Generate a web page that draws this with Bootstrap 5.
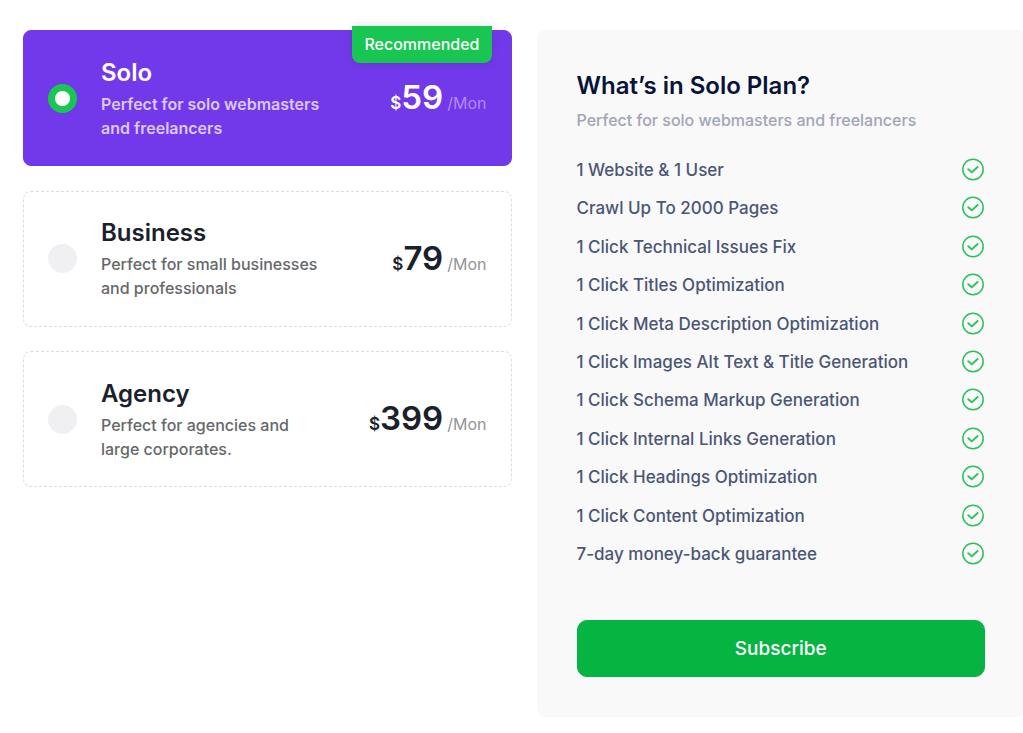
<!DOCTYPE html>
<html lang="en">
<head>
<meta charset="utf-8">
<meta name="viewport" content="width=device-width, initial-scale=1">
<title>Choose a plan</title>
<link href="https://cdn.jsdelivr.net/npm/bootstrap@5.3.0/dist/css/bootstrap.min.css" rel="stylesheet">
<style>
  body { font-family: Inter, "Liberation Sans", sans-serif; font-size: 16px; color: #1b212b; background: #fff; overflow-x: hidden; }
  .pricing { display: grid; grid-template-columns: repeat(2, minmax(0, 1fr)); gap: 25px; align-items: start; margin: 30px -2px 16px 23px; }
  .plan-list { min-height: 457px; }
  .plan { position: relative; min-height: 136px; padding: 0 24px; border: 1px dashed #dcdcdc; border-radius: 8px; cursor: pointer; }
  .plan-text { width: 224px; margin-left: 24px; }
  .plan-name { font-size: 24px; line-height: 32px; font-weight: 600; margin-bottom: 3px; }
  .plan-note { font-size: 16px; line-height: 24px; font-weight: 500; color: #66676b; }
  .plan-dot { width: 29px; height: 29px; margin: 0; border: 0; background-color: #f0f0f3; cursor: pointer; }
  .plan-dot:checked { background-color: #18c651; background-image: radial-gradient(circle, #fff 7px, transparent 8px); }
  .plan-price { padding-bottom: 2px; }
  .plan-currency { font-size: 17px; font-weight: 600; }
  .plan-amount { font-size: 33px; line-height: 42px; font-weight: 600; }
  .plan-period { font-size: 16px; color: #949496; margin-left: 4px; }
  .plan-active { background: #7239ea; border: 1px solid #7239ea; color: #fff; }
  .plan-active .plan-note { color: #dcc9fa; font-weight: 600; }
  .plan-active .plan-period { color: #b08af2; }
  .plan-flag { position: absolute; top: -5px; right: 19px; padding: 0 12px; font-size: 16px; line-height: 37px; font-weight: 500; color: #fff; background: #18c651; border-radius: 0 0 8px 8px; box-shadow: 0 0 8px rgba(0, 0, 0, .12); }
  .details { background: #f9f9f9; border-radius: 8px; padding: 40px; }
  .details-title { font-size: 24px; line-height: 32px; font-weight: 600; color: #071437; margin: 0; }
  .details-note { font-size: 16px; line-height: 24px; font-weight: 500; color: #a1a5b7; margin: 6px 0 26px; }
  .features { min-height: 408px; font-size: 17px; line-height: 24px; font-weight: 500; color: #4b5675; }
  .check-icon { width: 24px; height: 24px; flex: none; }
  .btn-subscribe { margin-top: 54px; padding: 0; font-size: 19px; line-height: 55px; font-weight: 500; border-radius: 10px; --bs-btn-color: #fff; --bs-btn-bg: #05b441; --bs-btn-border-color: #05b441; --bs-btn-hover-color: #fff; --bs-btn-hover-bg: #049c38; }
</style>
</head>
<body>
<svg class="d-none" aria-hidden="true">
  <symbol id="check" viewBox="0 0 24 24">
    <g fill="none" stroke="#2cc15d" stroke-linecap="round" stroke-linejoin="round">
      <circle cx="12" cy="11.5" r="10.2" stroke-width="1.5"/>
      <path d="M7.3 11.2 L10.8 14.4 L16.6 9" stroke-width="1.9"/>
    </g>
  </symbol>
</svg>
<main class="pricing">
  <div class="plan-list d-flex flex-column justify-content-between" role="radiogroup" aria-label="Plans">
    <label class="plan plan-active d-flex align-items-center" for="plan-solo">
      <input class="form-check-input plan-dot flex-shrink-0" type="radio" name="plan" id="plan-solo" checked>
      <span class="plan-text"><span class="plan-name d-block">Solo</span><span class="plan-note d-block">Perfect for solo webmasters and freelancers</span></span>
      <span class="plan-price ms-auto d-flex align-items-baseline"><span class="plan-currency">$</span><span class="plan-amount">59</span><span class="plan-period">/Mon</span></span>
      <span class="plan-flag">Recommended</span>
    </label>
    <label class="plan d-flex align-items-center" for="plan-business">
      <input class="form-check-input plan-dot flex-shrink-0" type="radio" name="plan" id="plan-business">
      <span class="plan-text"><span class="plan-name d-block">Business</span><span class="plan-note d-block">Perfect for small businesses and professionals</span></span>
      <span class="plan-price ms-auto d-flex align-items-baseline"><span class="plan-currency">$</span><span class="plan-amount">79</span><span class="plan-period">/Mon</span></span>
    </label>
    <label class="plan d-flex align-items-center" for="plan-agency">
      <input class="form-check-input plan-dot flex-shrink-0" type="radio" name="plan" id="plan-agency">
      <span class="plan-text"><span class="plan-name d-block">Agency</span><span class="plan-note d-block">Perfect for agencies and large corporates.</span></span>
      <span class="plan-price ms-auto d-flex align-items-baseline"><span class="plan-currency">$</span><span class="plan-amount">399</span><span class="plan-period">/Mon</span></span>
    </label>
  </div>
  <section class="details">
    <h2 class="details-title">What’s in Solo Plan?</h2>
    <p class="details-note">Perfect for solo webmasters and freelancers</p>
    <ul class="features list-unstyled d-flex flex-column justify-content-between mb-0">
      <li class="d-flex justify-content-between">1 Website &amp; 1 User<svg class="check-icon"><use href="#check"/></svg></li>
      <li class="d-flex justify-content-between">Crawl Up To 2000 Pages<svg class="check-icon"><use href="#check"/></svg></li>
      <li class="d-flex justify-content-between">1 Click Technical Issues Fix<svg class="check-icon"><use href="#check"/></svg></li>
      <li class="d-flex justify-content-between">1 Click Titles Optimization<svg class="check-icon"><use href="#check"/></svg></li>
      <li class="d-flex justify-content-between">1 Click Meta Description Optimization<svg class="check-icon"><use href="#check"/></svg></li>
      <li class="d-flex justify-content-between">1 Click Images Alt Text &amp; Title Generation<svg class="check-icon"><use href="#check"/></svg></li>
      <li class="d-flex justify-content-between">1 Click Schema Markup Generation<svg class="check-icon"><use href="#check"/></svg></li>
      <li class="d-flex justify-content-between">1 Click Internal Links Generation<svg class="check-icon"><use href="#check"/></svg></li>
      <li class="d-flex justify-content-between">1 Click Headings Optimization<svg class="check-icon"><use href="#check"/></svg></li>
      <li class="d-flex justify-content-between">1 Click Content Optimization<svg class="check-icon"><use href="#check"/></svg></li>
      <li class="d-flex justify-content-between">7-day money-back guarantee<svg class="check-icon"><use href="#check"/></svg></li>
    </ul>
    <button type="button" class="btn btn-subscribe w-100">Subscribe</button>
  </section>
</main>
<script src="https://cdn.jsdelivr.net/npm/bootstrap@5.3.0/dist/js/bootstrap.bundle.min.js"></script>
</body>
</html>
